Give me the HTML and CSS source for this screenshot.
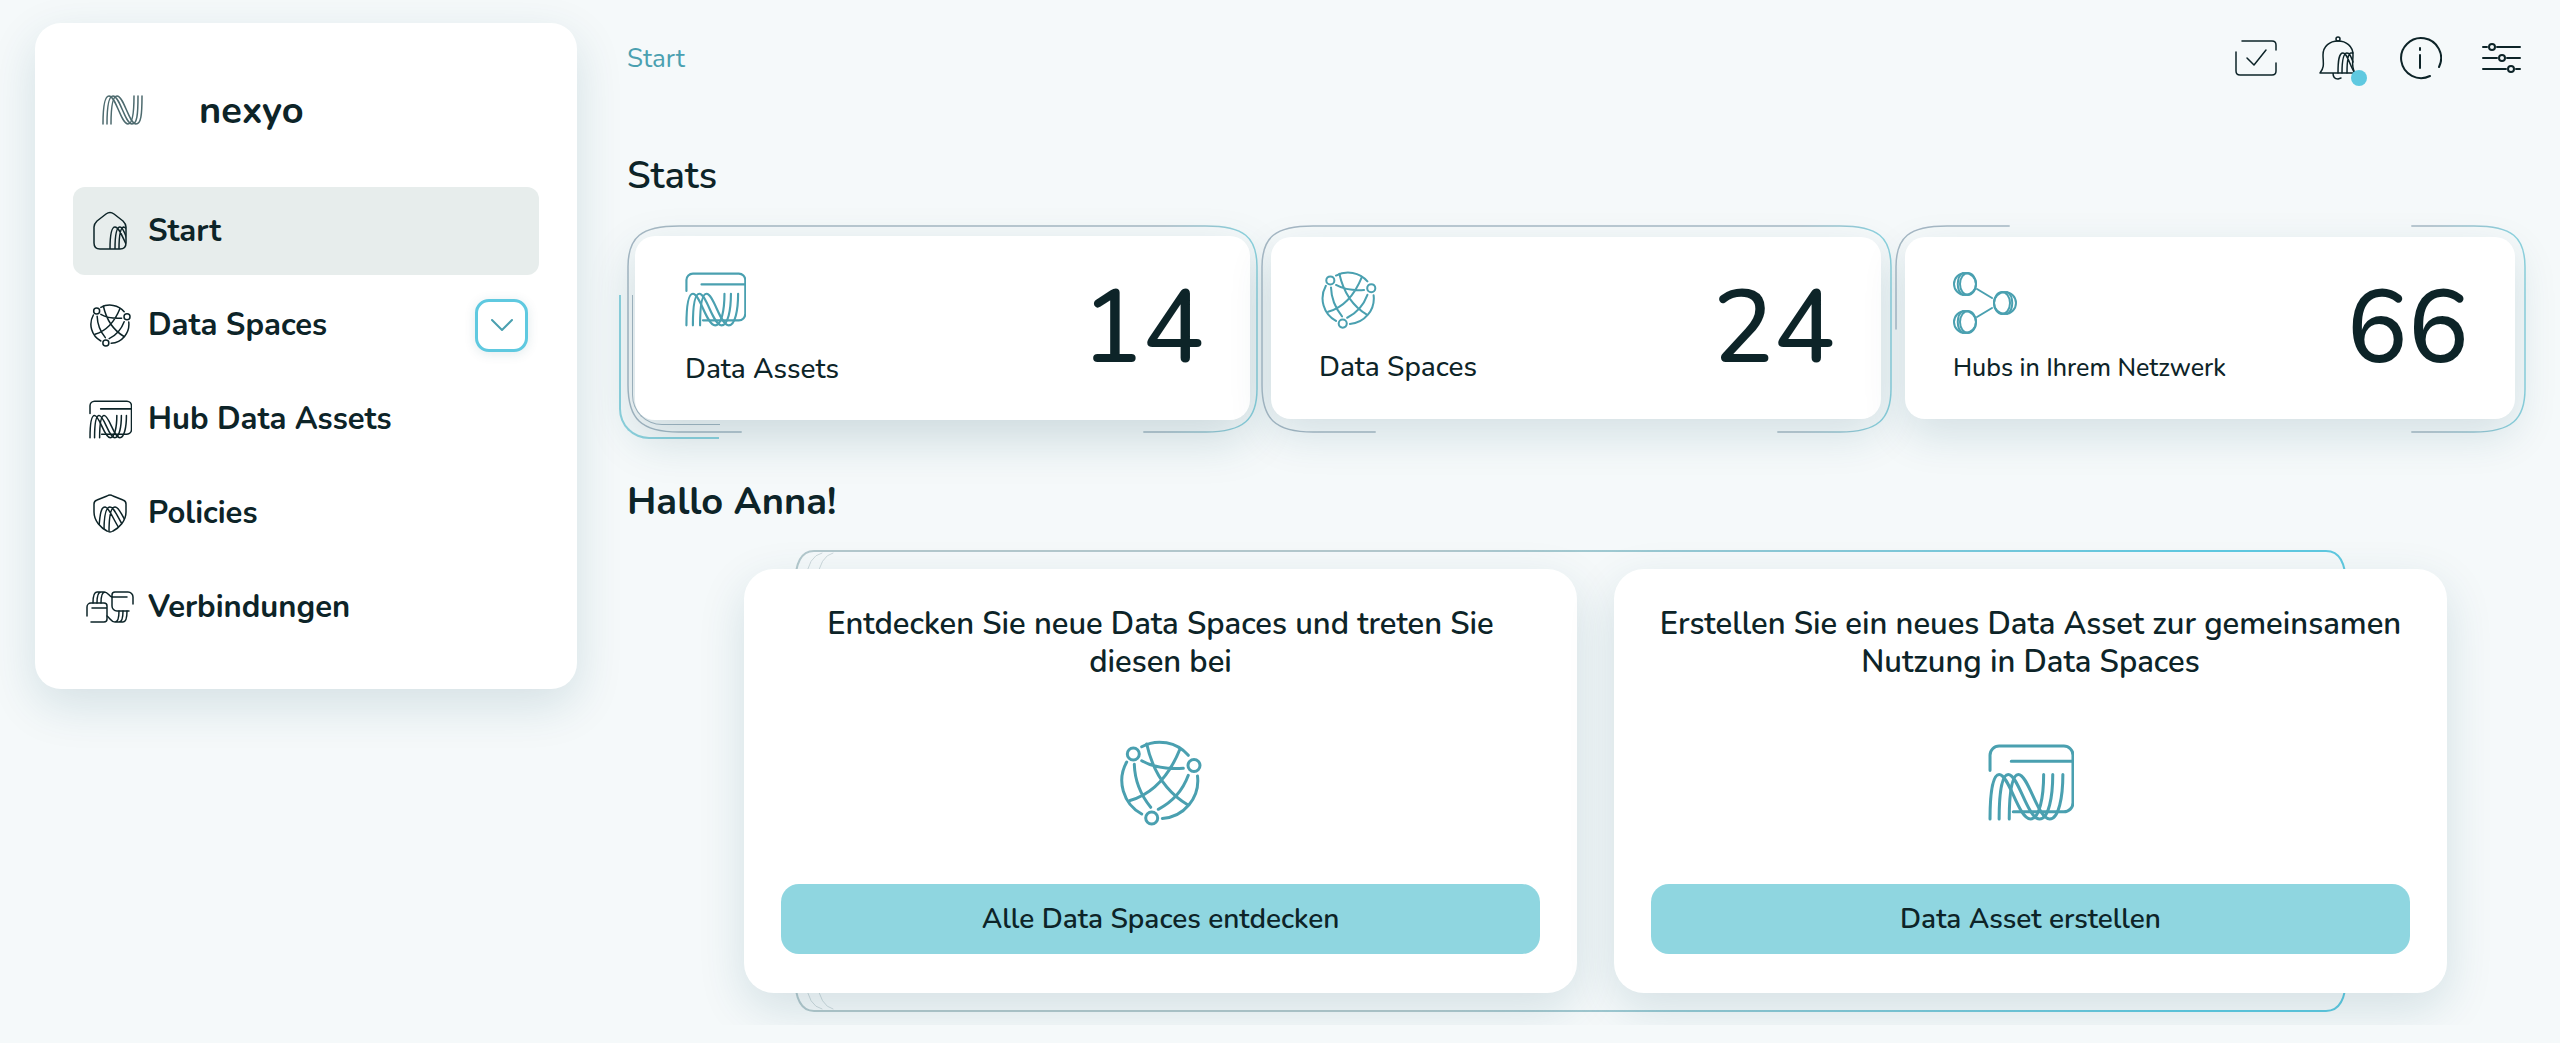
FILE: index.html
```
<!DOCTYPE html>
<html lang="de">
<head>
    <meta charset="utf-8">
    <title>nexyo - Start</title>
    <link rel="stylesheet" href="styles.css">
</head>
<body>
    <!-- Shared icons -->
    <svg class="sprite" aria-hidden="true">
        <defs>
            <linearGradient id="frameStroke" gradientUnits="userSpaceOnUse" x1="0" y1="0" x2="630" y2="0">
                <stop offset="0.85" stop-color="#a6b8c4"/>
                <stop offset="0.98" stop-color="#8dd2de"/>
            </linearGradient>
            <linearGradient id="panelStroke" gradientUnits="userSpaceOnUse" x1="0" y1="0" x2="1553" y2="0">
                <stop offset="0.4" stop-color="#b3c8cc"/>
                <stop offset="0.9" stop-color="#5fc9e0"/>
            </linearGradient>
            <clipPath id="homeClip"><path d="M17 0L33 12V37H15V0z"/></clipPath>
            <clipPath id="shieldClip"><path d="M17 1L33 6V18C33 28 24 36 17 38C10 36 1 28 1 18V6z"/></clipPath>
        </defs>
        <symbol id="assets" viewBox="0 0 85 76">
            <path d="M2 26V11A9 9 0 0 1 11 2H75A9 9 0 0 1 84 11V58A9 9 0 0 1 75 67H25M23 17H83"/>
            <path d="M2 74C2 52 4 30 11 30C21 30 30 74 42 74C51 74 55 52 55 30"/>
            <path d="M11 74C11 52 13 30 20 30C30 30 39 74 51 74C60 74 64 52 64 30"/>
            <path d="M21 74C21 52 23 30 30 30C40 30 49 74 61 74C70 74 74 52 74 30"/>
        </symbol>
        <symbol id="spaces" viewBox="0 0 82 86">
            <circle cx="13.3" cy="14" r="6"/>
            <circle cx="74" cy="25.5" r="6"/>
            <circle cx="31.7" cy="78" r="6"/>
            <path d="M21.7 6.7A38 38 0 0 1 68.3 15.3M6.7 22A38 38 0 0 0 21.7 74M77.5 36A38 38 0 0 1 42.3 78.5"/>
            <path d="M26.7 4Q36 46 68 65M60 9Q43 51 10 60.5M14.3 24.3Q15 48 30.7 67.3M68.3 35.3Q60 58 38.3 69.3M21.7 20.7Q38 30 63.3 28.3"/>
        </symbol>
    </svg>

    <div class="layout">
        <aside class="sidebar">
            <div class="brand">
                <svg class="brand-logo" viewBox="0 0 41 30">
                    <path d="M1 29C1 14 2 1 7 1C14 1 19 29 26 29C30 29 32 20 32 1"/>
                    <path d="M5 29C5 14 6 1 11 1C18 1 23 29 30 29C35 29 36 20 36 1"/>
                    <path d="M9 29C9 14 10 1 15 1C22 1 27 29 34 29C39 29 40 20 40 1"/>
                </svg>
                <span>nexyo</span>
            </div>
            <nav class="menu">
                <a href="#" class="menu-item active">
                    <span class="menu-icon">
                        <svg width="34" height="42" viewBox="0 -1 34 40">
                            <path d="M13 2Q17 -1 21 2L30 9Q33 12 33 15V31Q33 37 27 37H7Q1 37 1 31V15Q1 12 4 9z"/>
                            <path clip-path="url(#homeClip)" d="M17 37C17 25 18 15 22 15C26 15 29 24 34 34M22 37C22 25 23 15 27 15C30 15 32 22 34 27M26 37C26 25 27 15 31 15L34 17"/>
                        </svg>
                    </span>
                    Start
                </a>
                <div class="menu-row">
                    <a href="#" class="menu-item">
                        <span class="menu-icon"><svg width="41" height="43"><use href="#spaces"/></svg></span>
                        Data Spaces
                    </a>
                    <button type="button" class="expand" aria-label="Data Spaces aufklappen">
                        <svg width="22" height="13" viewBox="0 0 22 13"><path d="M1 1L11 11L21 1"/></svg>
                    </button>
                </div>
                <a href="#" class="menu-item">
                    <span class="menu-icon"><svg width="43" height="39"><use href="#assets"/></svg></span>
                    Hub Data Assets
                </a>
                <a href="#" class="menu-item">
                    <span class="menu-icon">
                        <svg width="34" height="39" viewBox="0 0 34 39">
                            <path d="M14 2Q17 0 20 2L30 6Q33 7 33 10V18C33 27 26 34 20 37Q17 39 14 37C8 34 1 27 1 18V10Q1 7 4 6z"/>
                            <path clip-path="url(#shieldClip)" d="M6 33C7 20 8 13 12 13C16 13 20 25 26 34M11 37C11 22 13 13 17 13C21 13 24 22 29 30M16 38C16 22 18 13 22 13C26 13 28 20 32 26"/>
                        </svg>
                    </span>
                    Policies
                </a>
                <a href="#" class="menu-item">
                    <span class="menu-icon">
                        <svg width="48" height="32" viewBox="0 0 48 32">
                            <path d="M47 13V6A5 5 0 0 0 42 1H29A3 3 0 0 0 26 4V15A5 5 0 0 0 31 20H43M26 6H41"/>
                            <path d="M1 25V16A4 4 0 0 1 5 12H18A3 3 0 0 1 21 15V28A3 3 0 0 1 18 31H5M6 17H21"/>
                            <path d="M7 12C7 5 8 1 11 1H18C22 1 23 5 26 6M11 12C11 5 12 1 15 1M15 12C15 5 16 1 19 1"/>
                            <path d="M41 20C41 27 40 31 37 31H29C25 31 24 27 21 25M37 20C37 27 36 31 33 31M33 20C33 27 32 31 29 31"/>
                        </svg>
                    </span>
                    Verbindungen
                </a>
            </nav>
        </aside>

        <main class="content">
            <header class="topbar">
                <a href="#" class="breadcrumb">Start</a>
                <div class="actions">
                    <button type="button" aria-label="Aufgaben">
                        <svg width="44" height="44" viewBox="0 0 44 44">
                            <path d="M8 5H38Q42 5 42 9V14M42 27V35Q42 39 38 39H6Q2 39 2 35V16M13 22L20 29L32 14"/>
                        </svg>
                    </button>
                    <button type="button" aria-label="Benachrichtigungen">
                        <svg width="44" height="44" viewBox="0 0 44 44">
                            <circle cx="22" cy="3" r="2"/>
                            <path d="M4 37C9 31 7 26 7 19C7 10 14 5 22 5C30 5 37 10 37 19C37 26 35 31 39 37zM17 37Q17 43 22 43L25 42"/>
                            <path d="M22 37C22 24 23 17 27 17C31 17 33 27 38 36M26 37C26 24 28 17 31 17C34 17 35 21 37 26M31 37C31 24 32 17 35 17H37"/>
                        </svg>
                        <span class="dot"></span>
                    </button>
                    <button type="button" aria-label="Info">
                        <svg class="bold" width="44" height="44" viewBox="0 0 44 44">
                            <path d="M32 40A20 20 0 1 1 41 31M22 19V32M22 12V14"/>
                        </svg>
                    </button>
                    <button type="button" aria-label="Einstellungen">
                        <svg class="bold" width="44" height="44" viewBox="0 0 44 44">
                            <circle cx="12" cy="11" r="3"/>
                            <circle cx="22" cy="22" r="3"/>
                            <circle cx="31" cy="33" r="3"/>
                            <path d="M3 11H7M17 11H40M3 22H17M27 22H40M3 33H26M36 33H40"/>
                        </svg>
                    </button>
                </div>
            </header>

            <h2>Stats</h2>
            <section class="stats">
                <div class="stat first">
                    <svg class="frame" viewBox="0 0 630 208" preserveAspectRatio="none">
                        <path d="M114 207H52C14 207 1 194 1 160V42C1 12 14 1 52 1H578C616 1 629 12 629 42V164C629 194 616 207 578 207H516"/>
                    </svg>
                    <span class="trail outer"></span>
                    <span class="trail inner"></span>
                    <div class="stat-card">
                        <div class="stat-info">
                            <svg width="61" height="55"><use href="#assets"/></svg>
                            <span>Data Assets</span>
                        </div>
                        <strong>14</strong>
                    </div>
                </div>
                <div class="stat">
                    <svg class="frame" viewBox="0 0 630 208" preserveAspectRatio="none">
                        <path d="M114 207H52C14 207 1 194 1 160V42C1 12 14 1 52 1H578C616 1 629 12 629 42V164C629 194 616 207 578 207H516"/>
                    </svg>
                    <div class="stat-card">
                        <div class="stat-info">
                            <svg width="60" height="58"><use href="#spaces"/></svg>
                            <span>Data Spaces</span>
                        </div>
                        <strong>24</strong>
                    </div>
                </div>
                <div class="stat">
                    <svg class="frame" viewBox="0 0 630 208" preserveAspectRatio="none">
                        <path d="M1 104V42C1 12 14 1 52 1H114M516 1H578C616 1 629 12 629 42V164C629 194 616 207 578 207H516"/>
                    </svg>
                    <div class="stat-card">
                        <div class="stat-info small">
                            <svg class="thin" width="64" height="62" viewBox="0 0 64 62">
                                <circle cx="12" cy="12" r="11"/>
                                <ellipse cx="15" cy="12" rx="8" ry="11"/>
                                <path d="M10 1C3 5 3 19 10 23"/>
                                <circle cx="12" cy="50" r="11"/>
                                <ellipse cx="15" cy="50" rx="8" ry="11"/>
                                <path d="M10 39C3 43 3 57 10 61"/>
                                <circle cx="52" cy="31" r="11"/>
                                <ellipse cx="49" cy="31" rx="8" ry="11"/>
                                <path d="M54 20C61 24 61 38 54 42M24 17L39 26M24 45L39 36"/>
                            </svg>
                            <span>Hubs in Ihrem Netzwerk</span>
                        </div>
                        <strong>66</strong>
                    </div>
                </div>
            </section>

            <h2 class="greeting">Hallo Anna!</h2>
            <section class="panels">
                <svg class="panel-frame" viewBox="0 0 1553 463" preserveAspectRatio="none">
                    <path class="faint" d="M12 232V30Q14 6 28 3M12 232V433Q14 457 28 460M23 232V30Q26 6 39 3M23 232V433Q26 457 39 460"/>
                    <path d="M20 1H1532Q1552 1 1552 36V427Q1552 462 1532 462H20Q1 462 1 427V36Q1 1 20 1z"/>
                </svg>
                <article class="panel">
                    <h3>Entdecken Sie neue Data Spaces und treten Sie diesen bei</h3>
                    <svg width="82" height="86"><use href="#spaces"/></svg>
                    <button type="button">Alle Data Spaces entdecken</button>
                </article>
                <article class="panel">
                    <h3>Erstellen Sie ein neues Data Asset zur gemeinsamen Nutzung in Data Spaces</h3>
                    <svg width="86" height="77"><use href="#assets"/></svg>
                    <button type="button">Data Asset erstellen</button>
                </article>
            </section>
        </main>
    </div>
</body>
</html>
```
FILE: styles.css
```
* {
    box-sizing: border-box;
}

body {
    margin: 0;
    background-color: #f5f9fa;
    color: #0d2428;
    font-family: Nunito, Lato, sans-serif;
}

a {
    color: inherit;
    text-decoration: none;
}

button {
    font-family: inherit;
    color: inherit;
    border: none;
    cursor: pointer;
}

svg {
    fill: none;
    stroke: #0d2428;
    stroke-width: 1.5;
    stroke-linecap: round;
    stroke-linejoin: round;
}

symbol {
    stroke-width: 3;
}

.sprite {
    position: absolute;
    width: 0;
    height: 0;
}

.layout {
    display: flex;
    align-items: flex-start;
    gap: 50px;
    padding: 23px 34px 32px 35px;
}

/* Sidebar */
.sidebar {
    flex: 0 0 542px;
    padding: 51px 38px;
    background-color: #fff;
    border-radius: 26px;
    box-shadow: 0 16px 48px rgba(16, 80, 96, 0.14);
}

.brand {
    display: flex;
    align-items: center;
    gap: 56px;
    height: 72px;
    margin-bottom: 41px;
    padding-left: 29px;
    font-size: 38px;
    font-weight: bold;
}

.brand-logo {
    width: 41px;
    height: 30px;
    stroke: #4d6a6e;
}

.menu {
    display: flex;
    flex-direction: column;
    gap: 6px;
    margin-bottom: -13px;
}

.menu-row {
    display: flex;
    align-items: center;
    padding-right: 11px;
}

.menu-item {
    display: flex;
    flex: 1;
    align-items: center;
    min-height: 88px;
    gap: 14px;
    padding-left: 13px;
    border-radius: 12px;
    font-size: 31px;
    font-weight: bold;
}

.menu-icon {
    display: flex;
    justify-content: center;
    width: 48px;
}

.menu-item.active {
    background-color: #e7edec;
}

.expand {
    display: flex;
    align-items: center;
    justify-content: center;
    width: 53px;
    height: 53px;
    background-color: #fff;
    border: 3px solid #5fc9e0;
    border-radius: 14px;
    box-shadow: 0 2px 12px rgba(16, 80, 96, 0.12);
}

.expand svg {
    stroke: #4aa0b0;
    stroke-width: 2;
}

/* Main area */
.content {
    flex: 1;
    min-width: 0;
}

.topbar {
    display: flex;
    justify-content: space-between;
    align-items: center;
    height: 70px;
}

.breadcrumb {
    color: #4aa0b0;
    font-size: 26px;
}

.actions {
    display: flex;
    gap: 38px;
    padding-right: 2px;
}

.actions button {
    position: relative;
    display: flex;
    padding: 0;
    background: none;
}

.actions .bold {
    stroke-width: 2;
}

.dot {
    position: absolute;
    right: -7px;
    bottom: -6px;
    width: 16px;
    height: 16px;
    border-radius: 50%;
    background-color: #5fc9e0;
}

h2 {
    margin: 60px 0 26px;
    font-size: 38px;
    line-height: 46px;
    font-weight: 600;
}

.stats {
    display: grid;
    grid-template-columns: repeat(3, 1fr);
    gap: 3px;
}

.stat {
    position: relative;
    padding: 12px 11px 14px 10px;
}

/* Highlighted stat, a bit larger than its neighbours */
.stat.first {
    padding: 11px 8px 13px;
}

.frame {
    position: absolute;
    top: 0;
    left: 0;
    width: 100%;
    height: 100%;
    stroke: url(#frameStroke);
}

.trail {
    position: absolute;
    width: 100px;
    height: 144px;
    border: solid #8dd2de;
    border-width: 0 0 2px 2px;
    border-bottom-left-radius: 30px;
}

.trail.outer {
    left: -8px;
    bottom: -6px;
}

.trail.inner {
    left: 5px;
    bottom: 8px;
    width: 88px;
    height: 130px;
    border-width: 0 0 1px 1px;
    border-color: #a6b8c4;
}

.stat-card {
    position: relative;
    display: flex;
    justify-content: space-between;
    align-items: center;
    height: 182px;
    padding: 0 46px 0 48px;
    background-color: #fff;
    border-radius: 20px;
    box-shadow: 0 16px 44px rgba(16, 80, 96, 0.14);
}

.first .stat-card {
    height: 184px;
    padding-left: 50px;
    box-shadow: 0 18px 48px rgba(16, 80, 96, 0.18);
}

.stat-card svg,
.panel svg {
    stroke: #4aa0b0;
}

.stat-card .thin {
    stroke-width: 2;
}

.stat-info {
    display: flex;
    flex-direction: column;
    gap: 20px;
    font-size: 28px;
    line-height: 36px;
    font-weight: 500;
}

.first .stat-info {
    gap: 24px;
    padding-top: 3px;
}

.stat-info.small {
    gap: 18px;
    font-size: 25px;
    line-height: 32px;
}

.stat-card strong {
    font-size: 102px;
    line-height: 120px;
    font-weight: 500;
}

.greeting {
    margin: 46px 0 44px;
    font-weight: bold;
}

.panels {
    position: relative;
    display: grid;
    grid-template-columns: 1fr 1fr;
    gap: 37px;
    padding: 0 79px 0 117px;
}

.panel-frame {
    position: absolute;
    top: -19px;
    left: 167px;
    width: calc(100% - 346px);
    height: calc(100% + 38px);
    stroke: url(#panelStroke);
    stroke-width: 2;
}

.panel-frame .faint {
    stroke: #ccd8db;
    stroke-width: 1;
}

.panel {
    position: relative;
    display: flex;
    flex-direction: column;
    align-items: center;
    justify-content: space-between;
    min-height: 424px;
    padding: 36px 37px 39px;
    background-color: #fff;
    border-radius: 30px;
    box-shadow: 0 16px 48px rgba(16, 80, 96, 0.14);
}

.panel h3 {
    margin: 0;
    font-size: 31px;
    line-height: 38px;
    font-weight: 600;
    text-align: center;
}

.panel button {
    width: 100%;
    height: 70px;
    border-radius: 18px;
    background-color: #8fd6e0;
    font-size: 28px;
    font-weight: 600;
}
```
